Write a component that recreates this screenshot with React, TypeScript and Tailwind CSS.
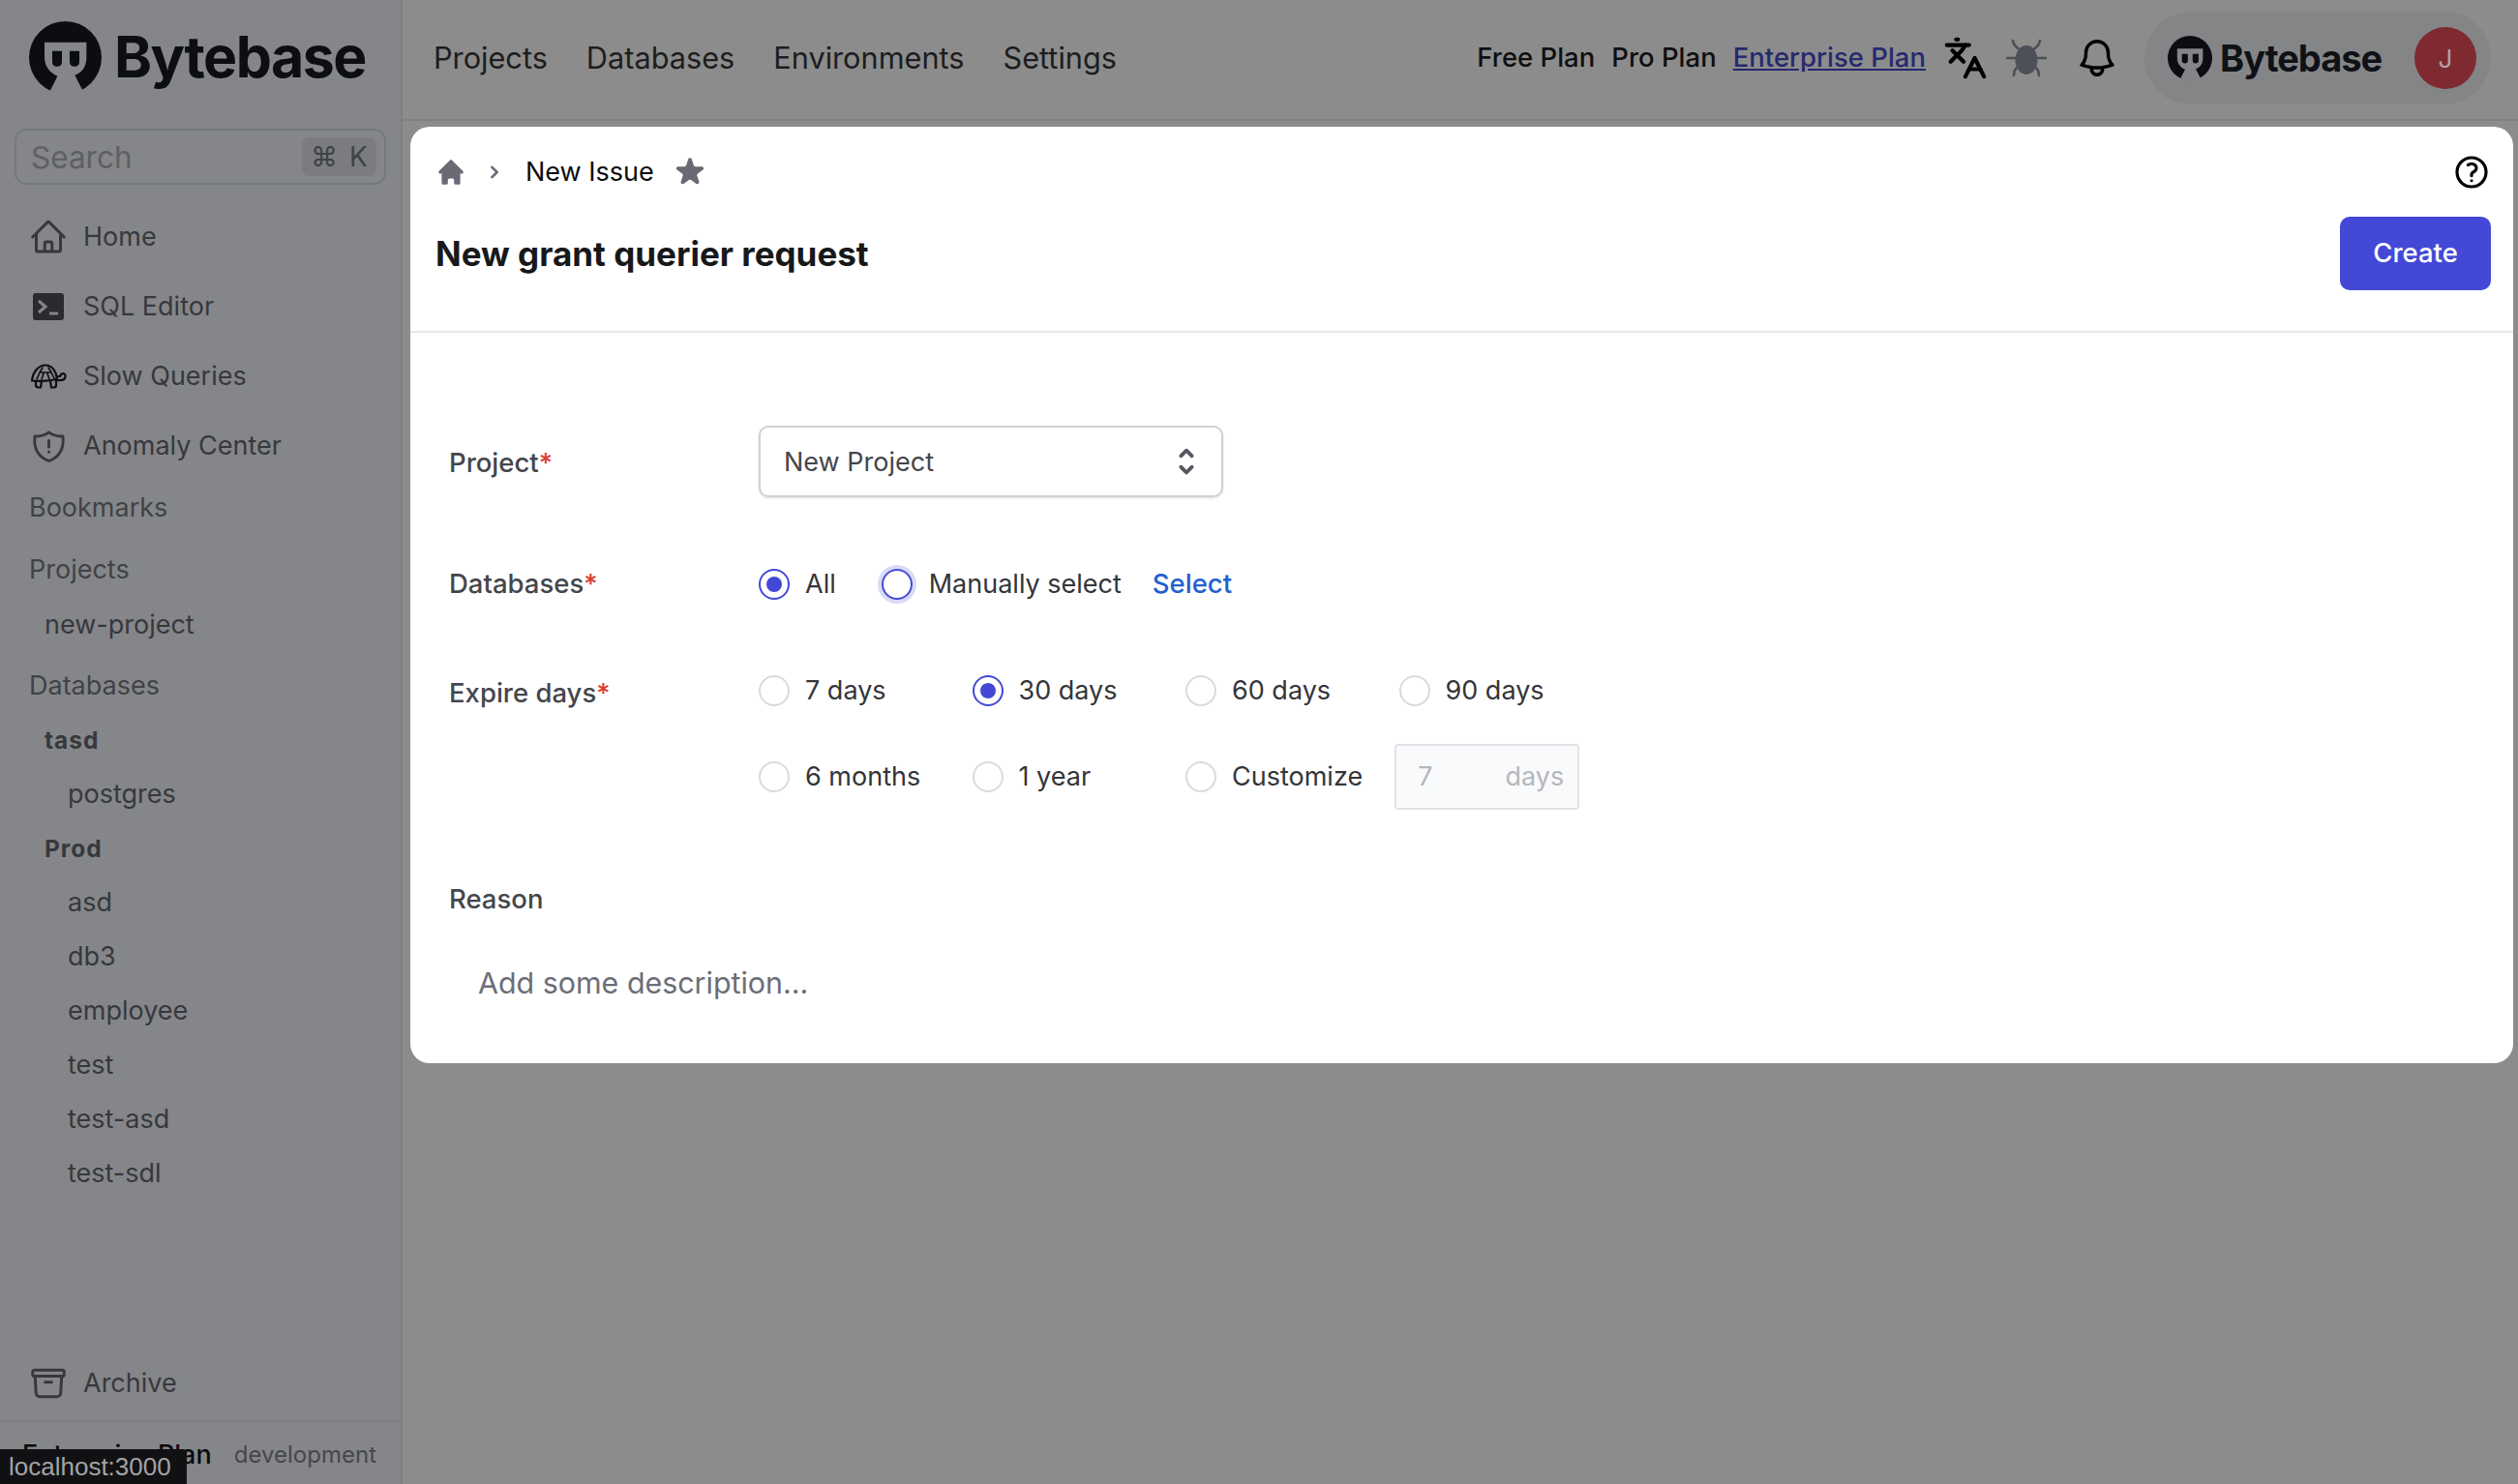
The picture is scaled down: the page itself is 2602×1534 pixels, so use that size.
import React from "react";
import { HiOutlineHome, HiOutlineArchiveBox, HiOutlineBell, HiOutlineQuestionMarkCircle } from "react-icons/hi2";
import { HiHome, HiStar, HiChevronRight, HiSelector } from "react-icons/hi";
import { Languages } from "lucide-react";

const Logo = ({ size, bg }: { size: number; bg: string }) => (
  <svg width={size} height={size} viewBox="0 0 225 225" className="shrink-0">
    <circle cx="112.5" cy="112.5" r="112.5" fill="#0b0d13" />
    <path d="M48 65H178V112C178 140 165 160 142 167L170 222Q112 232 64 218L88 170C65 160 48 140 48 112Z" fill={bg} />
    <path d="M72 92H102V125Q102 140 87 140Q72 140 72 125Z" fill="#0b0d13" />
    <path d="M126 92H156V125Q156 140 141 140Q126 140 126 125Z" fill="#0b0d13" />
  </svg>
);

const BugIcon = () => (
  <svg width="42" height="42" viewBox="0 0 42 42" fill="none" stroke="#4e5058" strokeWidth="2.6" strokeLinecap="round">
    <ellipse cx="21" cy="23" rx="11.5" ry="15" fill="#4e5058" stroke="none" />
    <path d="M1 21H41M7 3Q8 9 14 12M35 3Q34 9 28 12M8 39Q8 32 13 30M34 39Q34 32 29 30" />
  </svg>
);

const SqlIcon = () => (
  <svg width="32" height="28" viewBox="0 0 32 28">
    <rect width="32" height="28" rx="3" fill="#2a2b30" />
    <path d="M6 8L13 14L6 20" fill="none" stroke="#858689" strokeWidth="3" />
    <path d="M17 21H26" fill="none" stroke="#858689" strokeWidth="3" />
  </svg>
);

const TurtleIcon = () => (
  <svg width="38" height="26" viewBox="0 0 38 26" fill="none" stroke="#0c0e14" strokeWidth="2.2" strokeLinecap="round" strokeLinejoin="round">
    <path d="M2 17.5C3 8 9 1.5 16 1.5C23 1.5 27 8 28 15.5C24 17.5 8 18.5 2 17.5Z" />
    <path d="M7 16L10 9L13 4M25 15L22 9L19 4M10 9H22M12 16L14 10M20 16L18 10" strokeWidth="1.6" />
    <path d="M6 18V22Q6 24.5 9 24.5H11L12 18M21 18L22 24.5H25Q27 24.5 27 22V17" />
    <path d="M28 13H31C33 8.500 37 10 36.500 13.500C36 17 32 17.500 28 17" />
  </svg>
);

const ShieldIcon = () => (
  <svg width="33" height="33" viewBox="0 0 33 33" fill="none" stroke="#37383d" strokeWidth="2.8" strokeLinecap="round" strokeLinejoin="round">
    <path d="M16.500 1.800C20 4.500 26 6 31 6C32.500 20 27 27.500 16.500 31.500C6 27.500 0.500 20 2 6C7 6 13 4.500 16.500 1.800Z" />
    <path d="M16.500 10.500V17M16.500 22V22.300" strokeWidth="3" />
  </svg>
);

const NavItem = ({ icon, label }: { icon: React.ReactNode; label: string }) => (
  <div className="flex items-center h-[72px] pl-[30px]">
    <span className="w-[40px] flex justify-center items-center">{icon}</span>
    <span className="ml-[16px] text-[27px] text-[#37383d]">{label}</span>
  </div>
);

const Side = ({ label, cls }: { label: string; cls: string }) => (
  <div className={`h-[56px] flex items-center text-[#37383d] ${cls}`}>{label}</div>
);

const Radio = ({ checked, halo }: { checked?: boolean; halo?: boolean }) => (
  <span className={`w-[32px] h-[32px] rounded-full shrink-0 flex items-center justify-center border-2 ${checked || halo ? "border-[#4349d6]" : "border-[#d8dade]"} ${halo ? "shadow-[0_0_0_4px_#d9dbf6]" : ""}`}>
    {checked && <span className="w-[16px] h-[16px] rounded-full bg-[#4349d6]" />}
  </span>
);

const Option = ({ label, checked }: { label: string; checked?: boolean }) => (
  <label className="w-[220.5px] flex items-center gap-[16px] h-[34px] shrink-0">
    <Radio checked={checked} />
    <span className="text-[27px] text-[#33353a]">{label}</span>
  </label>
);

const Label = ({ text, required, cls = "" }: { text: string; required?: boolean; cls?: string }) => (
  <div className={`w-[320px] shrink-0 text-[27.5px] font-medium text-[#44464c] ${cls}`}>
    {text}
    {required && <span className="text-[#dc3c32]">*</span>}
  </div>
);

export default function App() {
  return (
    <div className="relative w-[2602px] h-[1534px] overflow-hidden flex bg-[#8c8c8c] font-['Inter',sans-serif]">
      <aside className="w-[416px] shrink-0 h-full flex flex-col bg-[#858689] border-r-2 border-[#7e7f82]">
        <div className="flex items-start pl-[30px] pt-[22px] h-[133px]">
          <Logo size={75} bg="#858689" />
          <span className="ml-[13px] -mt-[1px] text-[59px] leading-[75px] font-bold tracking-[-1.5px] text-[#0c0e14]">Bytebase</span>
        </div>
        <div className="mx-[15px] h-[58px] rounded-[12px] border-2 border-[#75787e] flex items-center justify-between pl-[15px] pr-[8px]">
          <span className="text-[31.5px] pt-[1px] text-[#5e6064]">Search</span>
          <span className="w-[77px] h-[40px] rounded-[8px] bg-[#7b7c7f] flex items-center justify-center gap-[12px] text-[28px] text-[#3f4145]"><span>⌘</span><span>K</span></span>
        </div>
        <div className="mt-[18px]">
          <NavItem icon={<HiOutlineHome size={40} color="#37383d" strokeWidth={1.8} />} label="Home" />
          <NavItem icon={<SqlIcon />} label="SQL Editor" />
          <NavItem icon={<TurtleIcon />} label="Slow Queries" />
          <NavItem icon={<ShieldIcon />} label="Anomaly Center" />
        </div>
        <div className="flex-1">
          <div className="h-[46px] mt-[5px] flex items-center pl-[30px] text-[27px] text-[#404246]">Bookmarks</div>
          <div className="h-[46px] mt-[18px] flex items-center pl-[30px] text-[27px] text-[#404246]">Projects</div>
          <Side label="new-project" cls="pl-[46px] text-[27px] mt-[6px]" />
          <div className="h-[46px] mt-[12px] flex items-center pl-[30px] text-[27px] text-[#404246]">Databases</div>
          <Side label="tasd" cls="pl-[46px] text-[24.5px] font-bold tracking-[1px] text-[#26272b] mt-[5px]" />
          <Side label="postgres" cls="pl-[70px] text-[27px]" />
          <Side label="Prod" cls="pl-[46px] text-[24.5px] font-bold tracking-[1px] text-[#26272b]" />
          <Side label="asd" cls="pl-[70px] text-[27px]" />
          <Side label="db3" cls="pl-[70px] text-[27px]" />
          <Side label="employee" cls="pl-[70px] text-[27px]" />
          <Side label="test" cls="pl-[70px] text-[27px]" />
          <Side label="test-asd" cls="pl-[70px] text-[27px]" />
          <Side label="test-sdl" cls="pl-[70px] text-[27px]" />
        </div>
        <NavItem icon={<HiOutlineArchiveBox size={40} color="#37383d" strokeWidth={1.8} />} label="Archive" />
        <div className="h-[66px] mt-[2px] border-t-2 border-[#7e7f82] flex items-center justify-between pl-[23px] pr-[25px] pt-[4px]">
          <span className="text-[27px] font-medium text-[#0a0a0a]">Enterprise Plan</span>
          <span className="text-[24px] text-[#45474b]">development</span>
        </div>
      </aside>

      <div className="flex-1 min-w-0 flex flex-col">
        <header className="h-[125px] border-b-2 border-[#7f8082] flex items-center pl-[32px] pr-[28px] pb-[3px] shrink-0">
          <nav className="flex gap-[40px] text-[30.7px] text-[#1c1d20]">
            <span>Projects</span>
            <span>Databases</span>
            <span>Environments</span>
            <span>Settings</span>
          </nav>
          <div className="ml-auto flex items-center">
            <span className="text-[27.5px] font-medium text-[#0e0f11]">Free Plan</span>
            <span className="ml-[17px] text-[27.5px] font-medium text-[#0e0f11]">Pro Plan</span>
            <span className="ml-[17px] text-[27.5px] font-medium underline text-[#27296f]">Enterprise Plan</span>
            <Languages size={46} color="#000" strokeWidth={2.2} className="ml-[18px]" />
            <span className="ml-[19px]"><BugIcon /></span>
            <HiOutlineBell size={46} color="#000" strokeWidth={1.8} className="ml-[29px]" />
            <div className="ml-[26px] w-[358px] h-[96px] rounded-[48px] bg-[#848587] flex items-center pl-[24px]">
              <Logo size={46} bg="#848587" />
              <span className="ml-[8px] text-[38px] font-bold tracking-[-1px] text-[#0f1116]">Bytebase</span>
              <span className="ml-auto mr-[15px] w-[64px] h-[64px] rounded-full bg-[#7f2a30] flex items-center justify-center text-[26px] text-[#b6a3a5]">J</span>
            </div>
          </div>
        </header>

        <main className="pl-[8px] pr-[5px] pt-[6px]">
          <section className="rounded-[20px] bg-white h-[968px] flex flex-col">
            <div className="pl-[26px] pr-[23px] pt-[30px] pb-[42px] border-b-2 border-[#e5e7eb]">
              <div className="flex items-center h-[34px]">
                <HiHome size={32} color="#696a76" />
                <HiChevronRight size={26} color="#696a76" className="ml-[16px]" />
                <span className="ml-[19px] text-[27px] text-[#0c0c0e]">New Issue</span>
                <HiStar size={38} color="#696a76" className="ml-[18px]" />
                <HiOutlineQuestionMarkCircle size={40} color="#000" strokeWidth={1.9} className="ml-auto" />
              </div>
              <div className="flex items-center justify-between mt-[29px]">
                <h1 className="text-[35px] font-bold text-[#17181a]">New grant querier request</h1>
                <button className="w-[156px] h-[76px] rounded-[10px] bg-[#4349d6] text-white text-[27.5px] font-medium">Create</button>
              </div>
            </div>

            <div className="pl-[40px]">
              <div className="flex items-center mt-[96px]">
                <Label text="Project" required cls="mt-[4px]" />
                <div className="w-[480px] h-[74px] rounded-[10px] border-2 border-[#cfd1d6] shadow-sm flex items-center justify-between pl-[24px] pr-[17px]">
                  <span className="text-[27px] pt-[2px] text-[#44464c]">New Project</span>
                  <HiSelector size={38} color="#55565e" />
                </div>
              </div>
              <div className="flex items-center mt-[73px] h-[34px]">
                <Label text="Databases" required />
                <Radio checked />
                <span className="ml-[16px] text-[27px] text-[#33353a]">All</span>
                <span className="ml-[47px]"><Radio halo /></span>
                <span className="ml-[17px] text-[27px] text-[#33353a]">Manually select</span>
                <span className="ml-[32px] text-[27.5px] font-medium text-[#2260cf]">Select</span>
              </div>
              <div className="flex mt-[76px]">
                <Label text="Expire days" required cls="-mt-[1px]" />
                <div className="flex flex-col">
                  <div className="flex items-center h-[34px]">
                    <Option label="7 days" />
                    <Option label="30 days" checked />
                    <Option label="60 days" />
                    <Option label="90 days" />
                  </div>
                  <div className="flex items-center h-[68px] mt-[38px]">
                    <Option label="6 months" />
                    <Option label="1 year" />
                    <div className="flex items-center">
                      <Radio />
                      <span className="ml-[16px] text-[27px] text-[#33353a]">Customize</span>
                      <div className="ml-[33px] w-[191px] h-[68px] rounded-[4px] border-2 border-[#e1e3e7] bg-[#f9fafb] flex items-center justify-between pl-[22px] pr-[14px] text-[27px] text-[#b5b7bb]">
                        <span>7</span>
                        <span>days</span>
                      </div>
                    </div>
                  </div>
                </div>
              </div>
              <div className="mt-[76px] h-[34px] flex items-center text-[27.5px] font-medium text-[#44464c]">Reason</div>
              <div className="mt-[50px] h-[40px] pl-[30px] flex items-center text-[30.4px] text-[#6b6e78]">Add some description...</div>
            </div>
          </section>
        </main>
      </div>

      <div className="absolute left-0 bottom-0 h-[36px] w-[193px] bg-[#111114] rounded-tr-[4px] pl-[9px] flex items-center text-[26px] text-[#a3a3a3] font-['Liberation_Sans',sans-serif]">localhost:3000</div>
    </div>
  );
}
